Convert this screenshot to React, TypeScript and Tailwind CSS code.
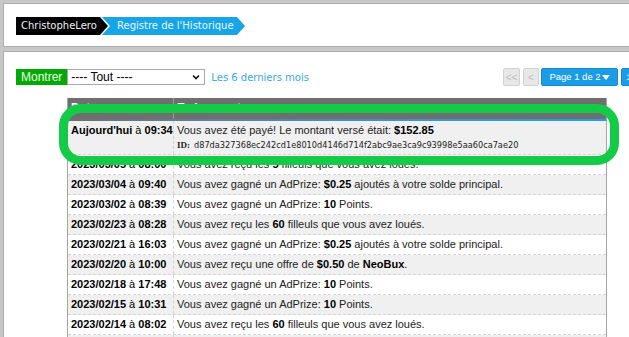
import type { ReactNode } from 'react'

const verdana = { fontFamily: '"DejaVu Sans", Verdana, sans-serif' }

type Row = { date: string; time: string; event: ReactNode; shade: boolean }

const rows: Row[] = [
  { date: '2023/03/05', time: '08:00', shade: false, event: <>Vous avez reçu les <b>5</b> filleuls que vous avez loués.</> },
  { date: '2023/03/04', time: '09:40', shade: true, event: <>Vous avez gagné un AdPrize: <b>$0.25</b> ajoutés à votre solde principal.</> },
  { date: '2023/03/02', time: '08:39', shade: false, event: <>Vous avez gagné un AdPrize: <b>10</b> Points.</> },
  { date: '2023/02/23', time: '08:28', shade: true, event: <>Vous avez reçu les <b>60</b> filleuls que vous avez loués.</> },
  { date: '2023/02/21', time: '16:03', shade: false, event: <>Vous avez gagné un AdPrize: <b>$0.25</b> ajoutés à votre solde principal.</> },
  { date: '2023/02/20', time: '10:00', shade: true, event: <>Vous avez reçu une offre de <b>$0.50</b> de <b>NeoBux</b>.</> },
  { date: '2023/02/18', time: '17:48', shade: false, event: <>Vous avez gagné un AdPrize: <b>10</b> Points.</> },
  { date: '2023/02/15', time: '10:31', shade: true, event: <>Vous avez gagné un AdPrize: <b>10</b> Points.</> },
  { date: '2023/02/14', time: '08:02', shade: false, event: <>Vous avez reçu les <b>60</b> filleuls que vous avez loués.</> },
  { date: '2023/02/12', time: '09:15', shade: true, event: <>Vous avez gagné un AdPrize: <b>10</b> Points.</> },
]

const Breadcrumb = () => (
  <div className="flex h-[18px] text-[10px] leading-[18px]" style={verdana}>
    <div className="w-[92px] bg-black pl-[5px] text-[#f2f2f2] [clip-path:polygon(0_0,84px_0,100%_50%,84px_100%,0_100%)]">
      ChristopheLero
    </div>
    <div className="-ml-[6px] w-[143px] bg-[#17a5e8] pl-[15px] text-[#eaf6ff] [clip-path:polygon(0_0,calc(100%-8px)_0,100%_50%,calc(100%-8px)_100%,0_100%,8px_50%)]">
      Registre de l'Historique
    </div>
  </div>
)

const Controls = () => (
  <div className="flex w-[622px] items-center justify-between">
    <div className="flex items-center">
      <div
        className="h-[16px] bg-[#03a903] px-[5px] text-[12px] leading-[16px] text-[#eaffe6]"
        style={{ fontFamily: '"Liberation Sans", Arial, sans-serif' }}
      >
        Montrer
      </div>
      <div
        className="flex h-[16px] w-[138px] items-center justify-between border border-[#a9a9a9] bg-white pl-[3px] pr-[4px] text-[12px] text-black"
        style={{ fontFamily: '"Liberation Sans", Arial, sans-serif' }}
      >
        <span className="leading-[14px]">---- Tout ----</span>
        <svg width="8" height="6" viewBox="0 0 8 6">
          <path d="M1 1.5 L4 4.5 L7 1.5" fill="none" stroke="#111" strokeWidth="1.6" />
        </svg>
      </div>
      <span className="ml-[6px] text-[10px] text-[#3ba5ec]" style={verdana}>
        Les 6 derniers mois
      </span>
    </div>
    <div
      className="flex items-center gap-[2px] text-[10px]"
      style={{ fontFamily: '"Liberation Sans", Arial, sans-serif' }}
    >
      <div className="flex h-[18px] w-[17px] items-center justify-center rounded-[2px] border border-[#d2d2d2] bg-[#e7e7e7] text-[#bdbdbd]">
        &lt;&lt;
      </div>
      <div className="ml-[1px] flex h-[18px] w-[16px] items-center justify-center rounded-[2px] border border-[#d2d2d2] bg-[#e7e7e7] text-[#bdbdbd]">
        &lt;
      </div>
      <div className="flex h-[18px] w-[77px] items-center justify-center gap-[1px] rounded-[2px] border border-[#1589d0] bg-[#1b9ce6] text-[9.5px] text-white">
        Page 1 de 2
        <svg width="8" height="5" viewBox="0 0 8 5">
          <path d="M0 0 H8 L4 5 Z" fill="#fff" />
        </svg>
      </div>
      <div className="ml-[1px] flex h-[18px] w-[17px] items-center justify-center rounded-[2px] border border-[#1589d0] bg-[#1b9ce6] text-white">
        &gt;
      </div>
    </div>
  </div>
)

const HistoryTable = () => (
  <div
    className="relative ml-[51px] mt-[12px] w-[540px] border-x border-[#a5a5a5] text-[11px] text-[#222]"
    style={{ fontFamily: '"Liberation Sans", Arial, sans-serif' }}
  >
    <div className="flex h-[21px] bg-[#6f6f6f] text-[12px] font-bold text-white">
      <div className="w-[106px] border-r border-[#9a9a9a] pl-[3px] pt-[1px]">Date</div>
      <div className="pl-[3px] pt-[1px]">Evénement</div>
    </div>
    <div className="h-[2px] bg-gradient-to-r from-[#6f6f6f] via-[#3f8fc4] to-[#17a5e8]" />

    <div className="flex h-[34px] border-b border-dashed border-[#d4d4d4] bg-[#f0f0f0]">
      <div className="w-[106px] border-r border-dashed border-[#d4d4d4] pl-[3px] pt-[3px] leading-[13px] text-black">
        <b>Aujourd'hui</b> à <b>09:34</b>
      </div>
      <div className="pl-[3px] pt-[3px] leading-[13px]">
        <div>
          Vous avez été payé! Le montant versé était: <b className="text-black">$152.85</b>
        </div>
        <div className="mt-[2px] flex items-baseline text-[#222]">
          <b className="text-[9px]" style={{ fontFamily: '"Liberation Serif", "Times New Roman", serif' }}>
            ID:
          </b>
          <span className="ml-[4px] text-[8.2px]" style={verdana}>
            d87da327368ec242cd1e8010d4146d714f2abc9ae3ca9c93998e5aa60ca7ae20
          </span>
        </div>
      </div>
    </div>

    {rows.map((r, i) => (
      <div
        key={i}
        className={`flex h-[20px] items-center border-b border-dashed border-[#d4d4d4] ${r.shade ? 'bg-[#f0f0f0]' : 'bg-white'}`}
      >
        <div className="flex h-full w-[106px] items-center border-r border-dashed border-[#d4d4d4] pl-[3px] text-black">
          <span>
            <b>{r.date}</b> à <b>{r.time}</b>
          </span>
        </div>
        <div className="pl-[3px] [&_b]:text-black">{r.event}</div>
      </div>
    ))}

    {/* highlight ring */}
    <div className="pointer-events-none absolute left-[-9px] top-[6px] h-[61px] w-[560px] rounded-[22px] border-[9px] border-[#13cb47]" />
  </div>
)

export default function App() {
  return (
    <div className="h-[337px] w-[629px] overflow-hidden bg-[#c7c7c7] pl-[3px] pt-[3px]">
      <div className="h-[44px] w-[700px] border border-[#adadad] bg-white pl-[12px] pt-[13px]">
        <Breadcrumb />
      </div>
      <div className="mt-[4px] h-[320px] w-[700px] border border-[#adadad] bg-white pl-[12px] pt-[16px]">
        <Controls />
        <HistoryTable />
      </div>
    </div>
  )
}
